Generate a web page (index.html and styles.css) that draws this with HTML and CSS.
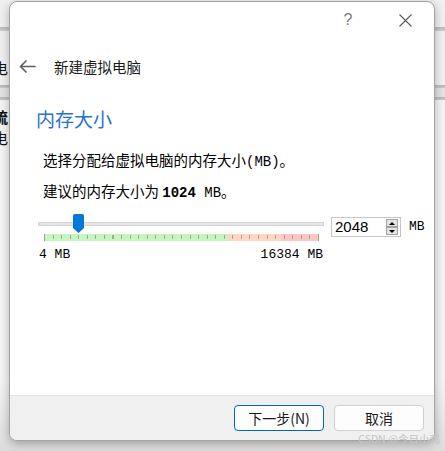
FILE: index.html
```html
<!DOCTYPE html>
<html lang="zh-CN">
<head>
<meta charset="utf-8">
<title>新建虚拟电脑</title>
<link rel="stylesheet" href="styles.css">
</head>
<body>
<div class="desk">
  <div class="behind">
    <div class="bt t1">电</div>
    <div class="bt t2">琉</div>
    <div class="bt t3">电</div>
  </div>
</div>

<div class="dialog">
  <div class="titlebar">
    <span class="tb-btn help">?</span>
    <span class="tb-btn close">
      <svg width="13" height="13" viewBox="0 0 13 13"><path d="M0.5 0.5 L12.5 12.5 M12.5 0.5 L0.5 12.5" stroke="#5a5a5a" stroke-width="1.1" fill="none"/></svg>
    </span>
  </div>

  <div class="header">
    <svg class="back" width="17" height="13" viewBox="0 0 17 13"><path d="M16 6.5 H1.5 M7 1 L1.5 6.5 L7 12" stroke="#606060" stroke-width="1.7" fill="none" stroke-linecap="round" stroke-linejoin="round"/></svg>
    <span class="title">新建虚拟电脑</span>
  </div>

  <div class="main">
    <h1 class="heading">内存大小</h1>
    <p class="desc">选择分配给虚拟电脑的内存大小<span class="m">(MB)</span>。</p>
    <p class="desc desc2">建议的内存大小为 <b class="m">1024</b><span class="m"> MB</span>。</p>

    <div class="slider-row">
      <div class="slider">
        <div class="track-zone">
          <div class="track"></div>
          <svg class="thumb" style="left:35px" width="11" height="19" viewBox="0 0 11 19"><path d="M2 0 H9 Q11 0 11 2 V14 L5.5 19 L0 14 V2 Q0 0 2 0 Z" fill="#0078d7"/></svg>
        </div>
        <div class="scale"></div>
        <div class="labels"><span>4 MB</span><span>16384 MB</span></div>
      </div>
      <div class="spin">
        <span class="spin-val">2048</span>
        <span class="spin-btns">
          <span class="sb"><span class="tri up"></span></span>
          <span class="sb"><span class="tri down"></span></span>
        </span>
      </div>
      <span class="unit">MB</span>
    </div>
  </div>

  <div class="footer">
    <button class="btn primary">下一步(N)</button>
    <button class="btn">取消</button>
  </div>
</div>

<div class="watermark">CSDN @今日小鸡</div>
</body>
</html>
```

FILE: styles.css
```css
html, body {
  margin: 0;
  padding: 0;
}

body {
  width: 445px;
  height: 451px;
  overflow: hidden;
  position: relative;
  font-family: "Noto Sans CJK SC", "Noto Sans", sans-serif;
  background: #e6e6e6;
}

.desk {
  width: 445px;
  height: 451px;
  background-color: #ededed;
  background-image: linear-gradient(to bottom,
    #f0f0f0 0, #f0f0f0 27px,
    #b9b9b9 27px, #cfcfcf 31px,
    #f0f0f0 31px, #f0f0f0 85px,
    #b9b9b9 85px, #c8c8c8 88px,
    #e2e2e2 88px, #e2e2e2 97px,
    #b9b9b9 97px, #c8c8c8 100px,
    #f4f4f4 100px, #f4f4f4 380px,
    #dcdcdc 451px);
}

.behind {
  padding-top: 59px;
  margin-left: -7px;
}

.bt {
  font-size: 15px;
  line-height: 17px;
  color: #111;
}

.t2 {
  margin-top: 32px;
  font-weight: 700;
}

.t3 {
  margin-top: 4px;
}

.dialog {
  position: absolute;
  left: 9px;
  top: 1px;
  width: 426px;
  height: 440px;
  box-sizing: border-box;
  border: 1px solid #a4a4a4;
  border-radius: 8px;
  background: #fff;
  box-shadow: 0 3px 10px rgba(0, 0, 0, 0.28);
  display: flex;
  flex-direction: column;
  overflow: hidden;
}

.titlebar {
  height: 36px;
  display: flex;
  justify-content: flex-end;
  align-items: center;
  padding-right: 6px;
  gap: 11px;
}

.tb-btn {
  width: 46px;
  height: 30px;
  display: flex;
  align-items: center;
  justify-content: center;
}

.help {
  font-family: "Liberation Sans", sans-serif;
  font-size: 16px;
  color: #7a7a7a;
}

.header {
  height: 57px;
  display: flex;
  align-items: center;
  padding-left: 9px;
  gap: 18px;
}

.title {
  font-size: 14.5px;
  color: #1a1a1a;
  line-height: 20px;
}

.main {
  display: flex;
  flex-direction: column;
}

.heading {
  margin: 12px 0 0 26px;
  font-size: 19px;
  line-height: 24px;
  font-weight: 400;
  color: #2a72d2;
}

.desc {
  margin: 19px 0 0 33px;
  font-size: 14.5px;
  line-height: 20px;
  color: #000;
}

.desc2 {
  margin-top: 9px;
}

.m {
  font-family: "Liberation Mono", monospace;
  font-size: 14px;
}

b.m {
  font-weight: 700;
}

.slider-row {
  display: flex;
  align-items: flex-start;
  margin: 9px 0 0 28px;
}

.slider {
  width: 286px;
}

.track-zone {
  position: relative;
  height: 22px;
}

.track {
  position: relative;
  top: 10px;
  height: 4px;
  box-sizing: border-box;
  border: 1px solid #d3d3d3;
  background: #e6e6e6;
}

.thumb {
  position: absolute;
  top: 2px;
  display: block;
}

.scale {
  margin-left: 6px;
  width: 275px;
  height: 7px;
  background-image:
    linear-gradient(to right, #a69c8c 0, #a69c8c 1px, transparent 1px, transparent 274px, #a69c8c 274px),
    repeating-linear-gradient(to right, #aca292 0, #aca292 1px, transparent 1px, transparent 8.5625px),
    linear-gradient(to right, #c6f6c0 0, #c6f6c0 66.8%, #ffd7c2 66.8%, #ffd7c2 86.1%, #ffc6c6 86.1%);
  background-size: 100% 7px, 100% 4px, 100% 7px;
  background-position: 0 0, 0 1px, 0 0;
  background-repeat: no-repeat;
}

.labels {
  display: flex;
  justify-content: space-between;
  margin-top: 6px;
  padding: 0 1px;
  font-family: "Liberation Mono", monospace;
  font-size: 13px;
  line-height: 16px;
  color: #000;
}

.spin {
  margin: 5px 0 0 7px;
  width: 70px;
  height: 20px;
  box-sizing: border-box;
  border: 1px solid #c6c6c6;
  background: #fff;
  display: flex;
  align-items: center;
  justify-content: space-between;
  padding: 0 2px 0 3px;
}

.spin-val {
  font-family: "Liberation Sans", sans-serif;
  font-size: 15px;
  line-height: 18px;
  color: #000;
}

.spin-btns {
  display: flex;
  flex-direction: column;
  gap: 0;
}

.sb {
  width: 12px;
  height: 8px;
  box-sizing: border-box;
  border: 1px solid #a2a2a2;
  background: #e4e4e4;
  display: flex;
  align-items: center;
  justify-content: center;
}

.tri {
  width: 0;
  height: 0;
  border-left: 3px solid transparent;
  border-right: 3px solid transparent;
}

.tri.up {
  border-bottom: 3px solid #000;
}

.tri.down {
  border-top: 3px solid #000;
}

.unit {
  margin: 7px 0 0 8px;
  font-family: "Liberation Mono", monospace;
  font-size: 13px;
  line-height: 16px;
}

.footer {
  margin-top: auto;
  height: 45px;
  box-sizing: border-box;
  border-top: 1px solid #e2e2e2;
  background: #f0f0f0;
  display: flex;
  justify-content: flex-end;
  gap: 10px;
  padding: 9px 10px 0 0;
}

.btn {
  width: 90px;
  height: 26px;
  padding: 0;
  box-sizing: border-box;
  border: 1px solid #d0d0d0;
  border-radius: 4px;
  background: #fdfdfd;
  font-family: "Noto Sans CJK SC", sans-serif;
  font-size: 14px;
  line-height: 22px;
  color: #1a1a1a;
}

.btn.primary {
  border-color: #0067c0;
}

.watermark {
  position: absolute;
  right: 5px;
  bottom: 6px;
  font-family: "Noto Sans CJK SC", "Liberation Sans", sans-serif;
  font-size: 10.5px;
  line-height: 12px;
  color: #c4c4c4;
}
```
